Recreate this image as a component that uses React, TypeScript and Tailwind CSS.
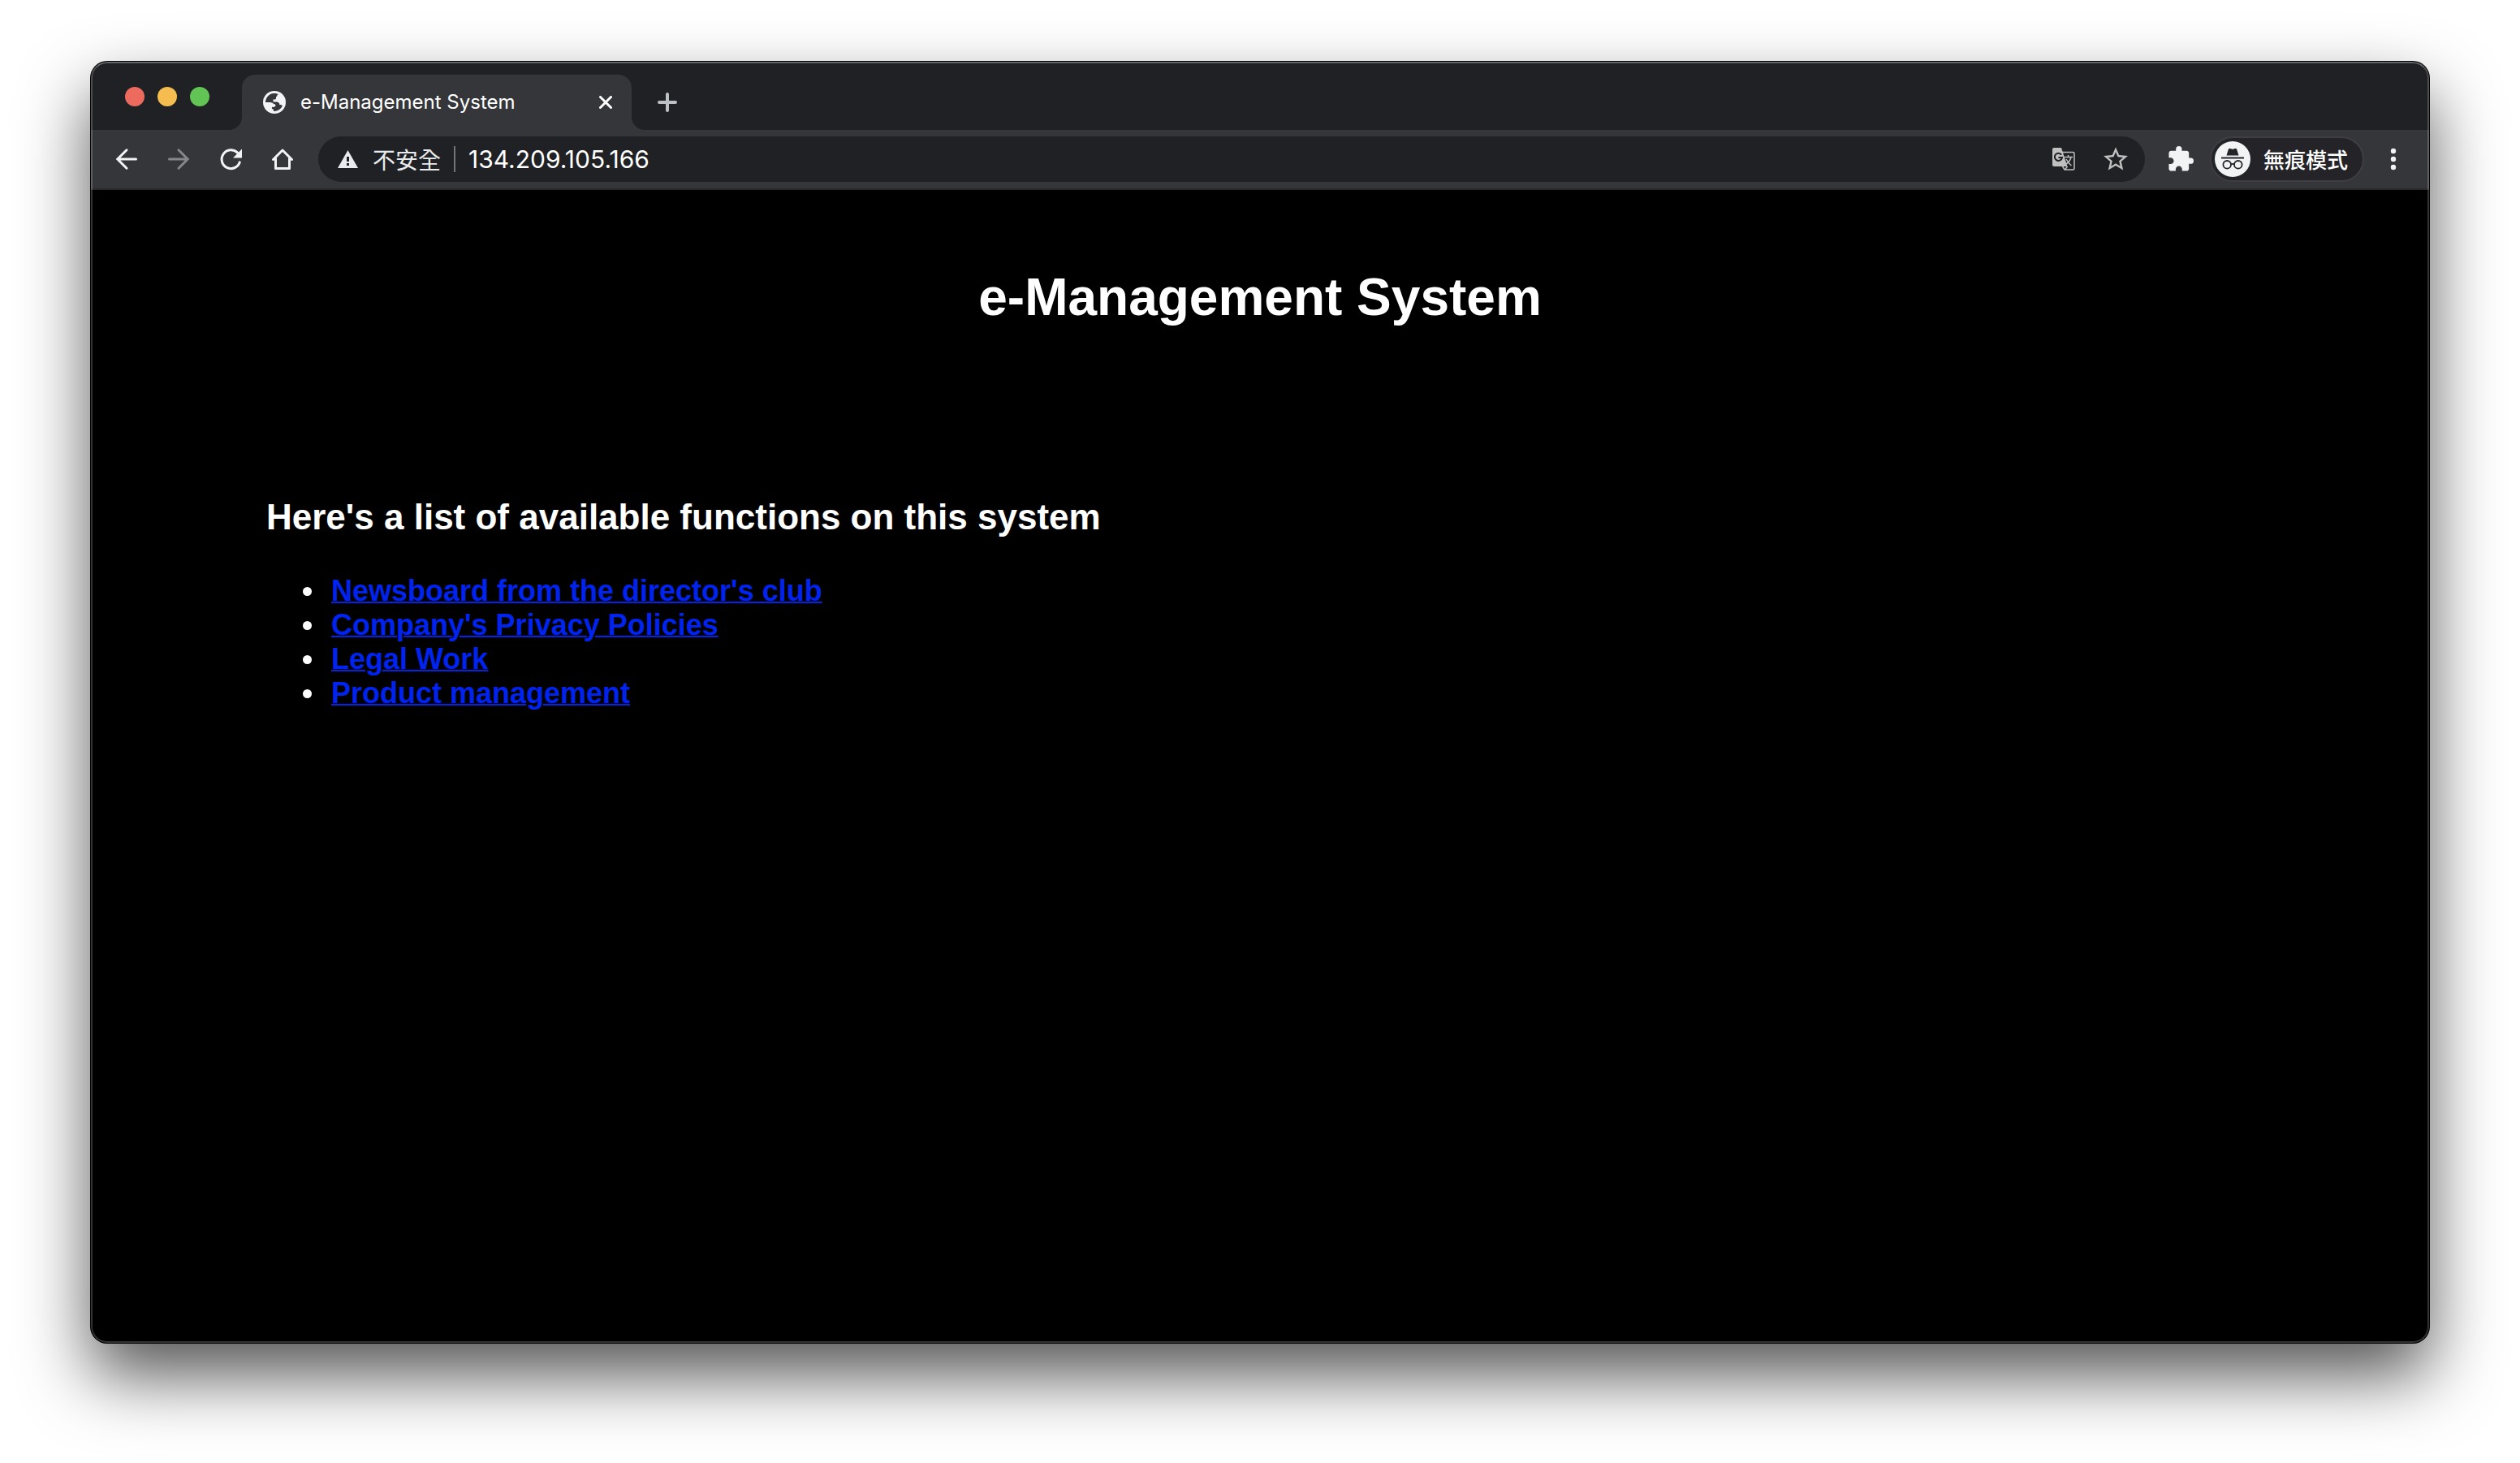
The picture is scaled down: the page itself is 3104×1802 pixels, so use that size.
import React from "react";
import type { ReactNode } from "react";

const links = [
  "Newsboard from the director's club",
  "Company's Privacy Policies",
  "Legal Work",
  "Product management",
];

function IconButton({ label, children }: { label: string; children: ReactNode }) {
  return (
    <button type="button" aria-label={label} className="flex size-8 shrink-0 items-center justify-center text-[#f1f3f4]">
      {children}
    </button>
  );
}

function Foot({ className }: { className: string }) {
  return (
    <svg className={className} viewBox="0 0 16 16" fill="#35363a" aria-hidden="true">
      <path d="M16 0v16H0A16 16 0 0 0 16 0z" />
    </svg>
  );
}

function TabStrip() {
  return (
    <div className="flex h-[84px] items-end bg-[#202124] pl-[42px]">
      <div className="flex h-full items-center gap-4 pr-6 pt-0.5">
        <button type="button" aria-label="Close window" className="size-6 rounded-full bg-[#ed6a5e]" />
        <button type="button" aria-label="Minimise window" className="size-6 rounded-full bg-[#f5bd4f]" />
        <button type="button" aria-label="Zoom window" className="size-6 rounded-full bg-[#61c454]" />
      </div>
      <div className="flex items-end">
        <Foot className="size-4" />
        <div className="flex h-[68px] w-[480px] items-center rounded-t-2xl bg-[#35363a] pl-[26px] pr-6">
          <svg className="size-7 shrink-0" viewBox="0 0 28 28" aria-hidden="true">
            <circle cx="14" cy="14" r="14" fill="#f1f3f4" />
            <path
              d="M15.500 3C17 3.200 18 3.600 19 4.200c-.2 1.800-1.200 2.800-3 2.800v2c0 1-.8 1.600-1.800 1.600H12.500v3h5.300c1.500 0 2.400 1 2.400 2.400v.9c1.600 0 2.700.2 3.800 1A11 11 0 0 1 13 25v-2.200c-1.500 0-2.500-1-2.500-2.500v-1.200c2 .6 4.800.3 5-1.200.2-1.300-1-1.700-2.500-1.700-2.300 0-3.200-2.200-5-2.200H3A11 11 0 0 1 15.500 3z"
              fill="#35363a"
            />
            <path d="M3.100 14.200h6.200c2.700 0 4.700 1.900 4.700 4.500v1h-3.200v4.800A11.500 11.500 0 0 1 3.100 14.200z" fill="#f1f3f4" />
            <path d="M17.500 4.500h3.500l4 5v7.500c-1.200.3-2.800.3-4-.6-1.600-1.300-1.600-2.900-3.600-3.200-2-.3-2.400-1.400-1.400-2.900 1-1.300 1.500-3.800 1.500-5.800z" fill="#f1f3f4" />
          </svg>
          <span className="ml-[18px] flex-1 whitespace-nowrap font-['Inter',sans-serif] text-[24px] leading-8 text-white">
            e-Management System
          </span>
          <button type="button" aria-label="Close tab" className="flex size-4 items-center justify-center">
            <svg className="size-4" viewBox="0 0 16 16" stroke="#fff" strokeWidth="3" strokeLinecap="round" aria-hidden="true">
              <path d="M1.500 1.500l13 13M14.500 1.500l-13 13" />
            </svg>
          </button>
        </div>
        <Foot className="size-4 -scale-x-100" />
      </div>
      <button type="button" aria-label="New tab" className="mb-[22px] ml-4 size-6">
        <svg className="size-6" viewBox="0 0 24 24" stroke="#bdc1c6" strokeWidth="4" strokeLinecap="round" aria-hidden="true">
          <path d="M12 2v20M2 12h20" />
        </svg>
      </button>
    </div>
  );
}

function AddressBar() {
  return (
    <div className="ml-[28px] flex h-14 flex-1 items-center rounded-full bg-[#202124] pl-6 pr-5">
      <svg className="h-[22px] w-[25px] shrink-0" viewBox="0 0 25 22" aria-hidden="true">
        <path d="M12.500 0L25 22H0z" fill="#e8eaed" />
        <path d="M11 8h3v6h-3zM11 16h3v3h-3z" fill="#202124" />
      </svg>
      <span className="ml-[18px] whitespace-nowrap font-['Noto_Sans_CJK_TC',sans-serif] text-[28px] leading-10 text-[#e8eaed]">
        不安全
      </span>
      <span className="ml-4 h-8 w-0.5 bg-[#737477]" />
      <input
        aria-label="Address"
        defaultValue="134.209.105.166"
        className="ml-4 min-w-0 flex-1 bg-transparent font-['Inter',sans-serif] text-[30px] leading-10 text-white outline-none"
      />
      <div className="flex gap-8">
        <button type="button" aria-label="Translate this page" className="size-8">
          <svg className="size-8" viewBox="0 0 32 32" aria-hidden="true">
            <path d="M14 7.500h13.500a1.500 1.500 0 0 1 1.500 1.500v18.500a1.500 1.500 0 0 1-1.500 1.500H17l-3-5z" fill="none" stroke="#c0c0c0" strokeWidth="1.500" />
            <path d="M4 2h9l7.500 23H4a2 2 0 0 1-2-2V4a2 2 0 0 1 2-2z" fill="#c0c0c0" />
            <path d="M13.200 10.600A4.600 4.600 0 1 0 14 14h-4.500" fill="none" stroke="#202124" strokeWidth="2" />
            <path d="M17 13.500h10M21.500 11v2.500M25 13.500c-1 4-3.500 7-6 8.500M19 16c1.500 3 4 6 6.500 8M17.500 29l3-4" fill="none" stroke="#c0c0c0" strokeWidth="1.500" />
          </svg>
        </button>
        <button type="button" aria-label="Bookmark this page" className="size-8">
          <svg className="size-8" viewBox="1.300 1.200 21.400 21.400" fill="#c0c0c0" aria-hidden="true">
            <path d="M22 9.240l-7.190-.62L12 2 9.190 8.630 2 9.240l5.460 4.730L5.820 21 12 17.270 18.180 21l-1.630-7.030L22 9.240zM12 15.400l-3.760 2.270 1-4.280-3.320-2.880 4.380-.38L12 6.100l1.710 4.040 4.380.38-3.320 2.880 1 4.280L12 15.400z" />
          </svg>
        </button>
      </div>
    </div>
  );
}

function Toolbar() {
  return (
    <div className="flex h-[74px] items-center border-b-2 border-[#29292b] bg-[#35363a] px-7">
      <div className="flex gap-8">
        <IconButton label="Back">
          <svg className="size-8" viewBox="0 0 32 32" fill="none" stroke="currentColor" strokeWidth="3" strokeLinecap="round" aria-hidden="true">
            <path d="M27.500 16H5M16 4.800L4.800 16 16 27.200" />
          </svg>
        </IconButton>
        <IconButton label="Forward">
          <svg className="size-8" viewBox="0 0 32 32" fill="none" stroke="#86878a" strokeWidth="3" strokeLinecap="round" aria-hidden="true">
            <path d="M4.500 16H27M16 4.800L27.200 16 16 27.200" />
          </svg>
        </IconButton>
        <IconButton label="Reload">
          <svg className="size-8" viewBox="0 0 32 32" aria-hidden="true">
            <path d="M24.500 8.100A11.400 11.400 0 1 0 27.300 19.800" fill="none" stroke="currentColor" strokeWidth="3" strokeLinecap="round" />
            <path d="M30 3.500V14.500H19z" fill="currentColor" />
          </svg>
        </IconButton>
        <IconButton label="Home">
          <svg className="size-8" viewBox="0 0 32 32" fill="none" stroke="currentColor" strokeWidth="3" strokeLinejoin="round" strokeLinecap="round" aria-hidden="true">
            <path d="M4.500 16.500L16 5l11.500 11.500M7.500 15v12.500h17V15" />
          </svg>
        </IconButton>
      </div>
      <AddressBar />
      <div className="ml-7 flex items-center">
        <IconButton label="Extensions">
          <svg className="size-8" viewBox="1 1 22 22" fill="currentColor" aria-hidden="true">
            <path d="M20.500 11H19V7c0-1.100-.9-2-2-2h-4V3.500a2.500 2.500 0 0 0-5 0V5H4c-1.100 0-1.990.9-1.990 2v3.800H3.500c1.490 0 2.700 1.210 2.700 2.700s-1.210 2.700-2.700 2.700H2V20c0 1.100.9 2 2 2h3.800v-1.500c0-1.490 1.210-2.700 2.700-2.700s2.700 1.210 2.700 2.700V22H17c1.100 0 2-.9 2-2v-4h1.500a2.500 2.500 0 0 0 0-5z" />
          </svg>
        </IconButton>
        <button
          type="button"
          className="ml-5 flex h-14 items-center rounded-full border-2 border-[#3e3e43] bg-[#242428] pl-1 pr-[18px] font-['Noto_Sans_CJK_TC',sans-serif] text-[26px] font-medium leading-9 text-white"
        >
          <svg className="mr-4 size-11" viewBox="0 0 44 44" aria-hidden="true">
            <circle cx="22" cy="22" r="22" fill="#f1f3f4" />
            <path d="M14.500 17.500l2.200-7.200a2 2 0 0 1 2.500-1.400l1.600.6a4 4 0 0 0 2.400 0l1.600-.6a2 2 0 0 1 2.500 1.400l2.200 7.200zM8 19.500h28v2H8z" fill="#242428" />
            <g fill="none" stroke="#242428" strokeWidth="1.800">
              <circle cx="15.200" cy="28.800" r="4.800" />
              <circle cx="28.800" cy="28.800" r="4.800" />
              <path d="M19.900 28.500q2.100-1.300 4.200 0" />
            </g>
          </svg>
          無痕模式
        </button>
        <div className="ml-5">
          <IconButton label="Menu">
            <svg className="size-8" viewBox="0 0 32 32" fill="currentColor" aria-hidden="true">
              <circle cx="16" cy="6" r="3.200" />
              <circle cx="16" cy="16" r="3.200" />
              <circle cx="16" cy="26" r="3.200" />
            </svg>
          </IconButton>
        </div>
      </div>
    </div>
  );
}

export default function App() {
  return (
    <div className="flex min-h-screen flex-col bg-white px-28 pb-[148px] pt-[76px]">
      <div className="relative flex flex-1 flex-col overflow-hidden rounded-[20px] bg-black shadow-[0_0_0_1px_#000,0_40px_84px_rgba(0,0,0,0.67)]">
        <TabStrip />
        <Toolbar />
        <main className="px-[7.5%] font-['Liberation_Sans',sans-serif] font-bold text-white">
          <h1 className="mt-[95px] text-center text-[64px] leading-[74px]">e-Management System</h1>
          <h2 className="mt-52 text-[44px] leading-[52px]">Here's a list of available functions on this system</h2>
          <ul className="mt-11 list-disc pl-[74px] text-[36px] leading-[42px]">
            {links.map((text) => (
              <li key={text} className="pl-1.5">
                <a href="#" className="text-[#0023ee] underline decoration-2">
                  {text}
                </a>
              </li>
            ))}
          </ul>
        </main>
        <div className="pointer-events-none absolute inset-0 rounded-[20px] border-2 border-white/20 border-t-white/30" />
      </div>
    </div>
  );
}
